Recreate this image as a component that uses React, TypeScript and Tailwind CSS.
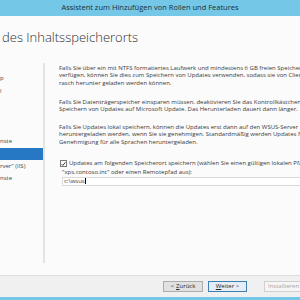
import React from "react";

const navItems = [
  { text: "", active: false },
  { text: "p", active: false },
  { text: "l", active: false },
  { text: "", active: false },
  { text: "", active: false },
  { text: "", active: false },
  { text: "nste", active: false },
  { text: "", active: true },
  { text: "rver\" (IIS)", active: false },
  { text: "nste", active: false },
];

export default function App() {
  return (
    <div className="w-[300px] h-[300px] flex flex-col bg-[#fbfbfb] overflow-hidden font-['Open_Sans',sans-serif] text-[#3a3a3a]">
      {/* title bar */}
      <div className="h-[16px] shrink-0 bg-[#74c7e6] flex items-center justify-center text-[7.5px] text-[#1b2f3a]">
        Assistent zum Hinzufügen von Rollen und Features
      </div>

      {/* page heading */}
      <div className="h-[44px] shrink-0 pl-[2px] pt-[12px] text-[13px] font-light leading-[18px] text-[#2e2e2e] whitespace-nowrap">
        des Inhaltsspeicherorts
      </div>

      <div className="h-[215px] shrink-0 flex">
        {/* left nav */}
        <div className="w-[43px] shrink-0 flex flex-col text-[6px] text-[#444]">
          {navItems.map((item, i) => (
            <div
              key={i}
              className={
                item.active
                  ? "h-[12.5px] flex items-center bg-[#2677c4] whitespace-nowrap overflow-hidden"
                  : "h-[12.5px] flex items-center whitespace-nowrap overflow-hidden"
              }
            >
              {item.text}
            </div>
          ))}
        </div>

        {/* divider */}
        <div className="w-[2px] h-[200px] mt-[3px] shrink-0 bg-[#e4e4e4]" />

        {/* content */}
        <div className="flex-1 min-w-0 pl-[14px] pt-[4.5px] text-[6px] leading-[7.5px] whitespace-nowrap overflow-hidden">
          <div>Falls Sie über ein mit NTFS formatiertes Laufwerk und mindestens 6 GB freien Speicherplatz</div>
          <div>verfügen, können Sie dies zum Speichern von Updates verwenden, sodass sie von Clients</div>
          <div>rasch herunter geladen werden können.</div>

          <div className="mt-[11.5px]">Falls Sie Datenträgerspeicher einsparen müssen, deaktivieren Sie das Kontrollkästchen zum</div>
          <div>Speichern von Updates auf Microsoft Update. Das Herunterladen dauert dann länger.</div>

          <div className="mt-[10px]">Falls Sie Updates lokal speichern, können die Updates erst dann auf den WSUS-Server</div>
          <div>heruntergeladen werden, wenn Sie sie genehmigen. Standardmäßig werden Updates für</div>
          <div>Genehmigung für alle Sprachen heruntergeladen.</div>

          <div className="mt-[13.5px] flex items-center h-[8px]">
            <span className="w-[7px] h-[7px] ml-[1px] mr-[2px] border border-[#7a7a7a] bg-white flex items-center justify-center">
              <svg viewBox="0 0 8 8" className="w-[6px] h-[6px]">
                <path d="M1 4.2 L3 6.3 L7 1.3" fill="none" stroke="#222" strokeWidth="1.4" />
              </svg>
            </span>
            <span>Updates am folgenden Speicherort speichern (wählen Sie einen gültigen lokalen Pfad oder</span>
          </div>
          <div className="pl-[3px] h-[8px] leading-[8px]">"xps.contoso.int" oder einen Remotepfad aus):</div>
          <div className="ml-[3px] mt-[1px] h-[9px] border-y border-l border-[#dadada] bg-white flex items-center pl-[1px] leading-[7px]">
            c:\wsus<span className="w-[0.5px] h-[6px] bg-black ml-[0.5px]" />
          </div>
        </div>
      </div>

      {/* footer */}
      <div className="h-[22px] shrink-0 border-t border-[#dcdcdc] bg-[#f0f0f0] flex items-center pl-[163px] gap-[5px] text-[6px]">
        <div className="w-[40px] h-[11px] shrink-0 border border-[#adadad] bg-[#e1e1e1] flex items-center justify-center text-[#222]">
          &lt; <span className="underline ml-[2px]">Z</span>urück
        </div>
        <div className="w-[39px] h-[11px] shrink-0 border border-[#3c7fb1] bg-[#e5eef6] flex items-center justify-center text-[#222]">
          <span className="underline">W</span>eiter &gt;
        </div>
        <div className="w-[45px] h-[11px] ml-[12px] shrink-0 border border-[#cfcfcf] bg-[#f6f6f6] flex items-center pl-[3px] text-[#a3a3a3]">
          Installieren
        </div>
      </div>

      {/* bottom accent */}
      <div className="h-[3px] shrink-0 bg-[#74c7e6]" />
    </div>
  );
}
